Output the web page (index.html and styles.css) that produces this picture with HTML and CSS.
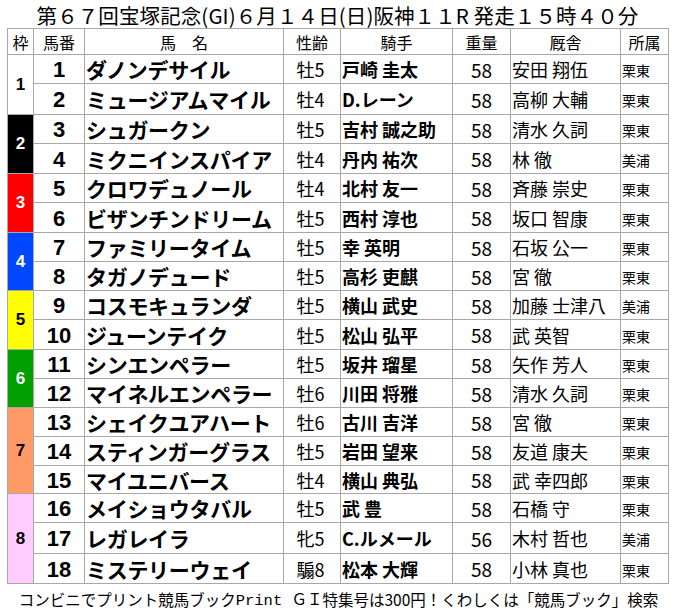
FILE: index.html
```html
<!DOCTYPE html>
<html lang="ja">
<head>
<meta charset="utf-8">
<title>第67回宝塚記念</title>
<link rel="stylesheet" href="styles.css">
</head>
<body>
<div class="page">
  <h1 class="title">第６７回宝塚記念(GI)６月１４日(日)阪神１１R 発走１５時４０分</h1>
  <div class="grid">
    <div class="hd">枠</div><div class="hd">馬番</div><div class="hd">馬　名</div><div class="hd">性齢</div><div class="hd">騎手</div><div class="hd">重量</div><div class="hd">厩舎</div><div class="hd">所属</div>

    <div class="waku w1 s2">1</div>
    <div class="num">1</div><div class="name">ダノンデサイル</div><div class="age">牡5</div><div class="jk">戸崎 圭太</div><div class="wt">58</div><div class="tr">安田 翔伍</div><div class="af">栗東</div>
    <div class="num">2</div><div class="name">ミュージアムマイル</div><div class="age">牡4</div><div class="jk">D.レーン</div><div class="wt">58</div><div class="tr">高柳 大輔</div><div class="af">栗東</div>

    <div class="waku w2 s2">2</div>
    <div class="num">3</div><div class="name">シュガークン</div><div class="age">牡5</div><div class="jk">吉村 誠之助</div><div class="wt">58</div><div class="tr">清水 久詞</div><div class="af">栗東</div>
    <div class="num">4</div><div class="name">ミクニインスパイア</div><div class="age">牡4</div><div class="jk">丹内 祐次</div><div class="wt">58</div><div class="tr">林 徹</div><div class="af">美浦</div>

    <div class="waku w3 s2">3</div>
    <div class="num">5</div><div class="name">クロワデュノール</div><div class="age">牡4</div><div class="jk">北村 友一</div><div class="wt">58</div><div class="tr">斉藤 崇史</div><div class="af">栗東</div>
    <div class="num">6</div><div class="name">ビザンチンドリーム</div><div class="age">牡5</div><div class="jk">西村 淳也</div><div class="wt">58</div><div class="tr">坂口 智康</div><div class="af">栗東</div>

    <div class="waku w4 s2">4</div>
    <div class="num">7</div><div class="name">ファミリータイム</div><div class="age">牡5</div><div class="jk">幸 英明</div><div class="wt">58</div><div class="tr">石坂 公一</div><div class="af">栗東</div>
    <div class="num">8</div><div class="name">タガノデュード</div><div class="age">牡5</div><div class="jk">高杉 吏麒</div><div class="wt">58</div><div class="tr">宮 徹</div><div class="af">栗東</div>

    <div class="waku w5 s2">5</div>
    <div class="num">9</div><div class="name">コスモキュランダ</div><div class="age">牡5</div><div class="jk">横山 武史</div><div class="wt">58</div><div class="tr">加藤 士津八</div><div class="af">美浦</div>
    <div class="num">10</div><div class="name">ジューンテイク</div><div class="age">牡5</div><div class="jk">松山 弘平</div><div class="wt">58</div><div class="tr">武 英智</div><div class="af">栗東</div>

    <div class="waku w6 s2">6</div>
    <div class="num">11</div><div class="name">シンエンペラー</div><div class="age">牡5</div><div class="jk">坂井 瑠星</div><div class="wt">58</div><div class="tr">矢作 芳人</div><div class="af">栗東</div>
    <div class="num">12</div><div class="name">マイネルエンペラー</div><div class="age">牡6</div><div class="jk">川田 将雅</div><div class="wt">58</div><div class="tr">清水 久詞</div><div class="af">栗東</div>

    <div class="waku w7 s3">7</div>
    <div class="num">13</div><div class="name">シェイクユアハート</div><div class="age">牡6</div><div class="jk">古川 吉洋</div><div class="wt">58</div><div class="tr">宮 徹</div><div class="af">栗東</div>
    <div class="num">14</div><div class="name">スティンガーグラス</div><div class="age">牡5</div><div class="jk">岩田 望来</div><div class="wt">58</div><div class="tr">友道 康夫</div><div class="af">栗東</div>
    <div class="num">15</div><div class="name">マイユニバース</div><div class="age">牡4</div><div class="jk">横山 典弘</div><div class="wt">58</div><div class="tr">武 幸四郎</div><div class="af">栗東</div>

    <div class="waku w8 s3">8</div>
    <div class="num">16</div><div class="name">メイショウタバル</div><div class="age">牡5</div><div class="jk">武 豊</div><div class="wt">58</div><div class="tr">石橋 守</div><div class="af">栗東</div>
    <div class="num">17</div><div class="name">レガレイラ</div><div class="age">牝5</div><div class="jk">C.ルメール</div><div class="wt">56</div><div class="tr">木村 哲也</div><div class="af">美浦</div>
    <div class="num">18</div><div class="name">ミステリーウェイ</div><div class="age">騸8</div><div class="jk">松本 大輝</div><div class="wt">58</div><div class="tr">小林 真也</div><div class="af">栗東</div>
  </div>
  <p class="footer">コンビニでプリント競馬ブック<span class="mono">Print ＧＩ</span>特集号は300円！くわしくは「競馬ブック」検索</p>
</div>
</body>
</html>
```

FILE: styles.css
```css
* { box-sizing: border-box; }
html, body { margin: 0; padding: 0; background: #fff; }
body {
  font-family: "Noto Sans CJK JP", "Noto Sans", sans-serif;
  color: #000;
}
.page {
  width: 675px;
  height: 613px;
  display: flex;
  flex-direction: column;
}
.title {
  margin: 0;
  height: 28px;
  line-height: 30px;
  font-size: 20.5px;
  font-weight: normal;
  text-align: center;
  letter-spacing: 0.1px;
}
.sp { display: inline-block; width: 6px; }
.grid {
  margin-left: 7px;
  width: 662px;
  display: grid;
  grid-template-columns: 25px 50px 198px 56px 111px 57px 109px 47px;
  grid-template-rows: 25px 28px 30px 28px 29px 28px 29px 28px 28px 28px 29px 28px 28px 28px 28px 27px 28px 30px 29px;
  gap: 1px;
  padding: 1px;
  background: #a8a8a8;
}
.grid > div {
  background: #fff;
  display: flex;
  align-items: center;
  white-space: nowrap;
  overflow: hidden;
}
.hd {
  justify-content: center;
  font-size: 16px;
}
.waku {
  justify-content: center;
  font-family: "Liberation Sans", Arial, sans-serif;
  font-weight: bold;
  font-size: 17px;
}
.s2 { grid-row: span 2; }
.s3 { grid-row: span 3; }
.grid > .w1 { background: #fff; color: #000; }
.grid > .w2 { background: #000; color: #fff; }
.grid > .w3 { background: #ff0000; color: #fff; }
.grid > .w4 { background: #0047ff; color: #fff; }
.grid > .w5 { background: #ffff00; color: #000; }
.grid > .w6 { background: #00a000; color: #fff; }
.grid > .w7 { background: #ff9966; color: #000; }
.grid > .w8 { background: #ffccff; color: #000; }
.num {
  justify-content: center;
  font-family: "Liberation Sans", Arial, sans-serif;
  font-weight: bold;
  font-size: 22px;
  padding-top: 2px;
}
.name {
  font-weight: bold;
  font-size: 21px;
  padding-left: 1px;
  letter-spacing: -0.3px;
}
.age {
  justify-content: center;
  font-size: 18px;
  padding-right: 3px;
}
.jk {
  font-weight: bold;
  font-size: 18px;
  padding-left: 1px;
}
.wt {
  justify-content: center;
  font-size: 19px;
}
.tr {
  font-size: 18px;
  padding-left: 1px;
}
.af {
  font-size: 14px;
  padding-left: 1px;
  padding-top: 2px;
}
.footer {
  margin: 0;
  flex: 1;
  display: flex;
  align-items: center;
  justify-content: center;
  font-size: 15.5px;
  padding-left: 2px;
}
.mono {
  font-family: "Liberation Mono", "Noto Sans CJK JP", monospace;
}
```
